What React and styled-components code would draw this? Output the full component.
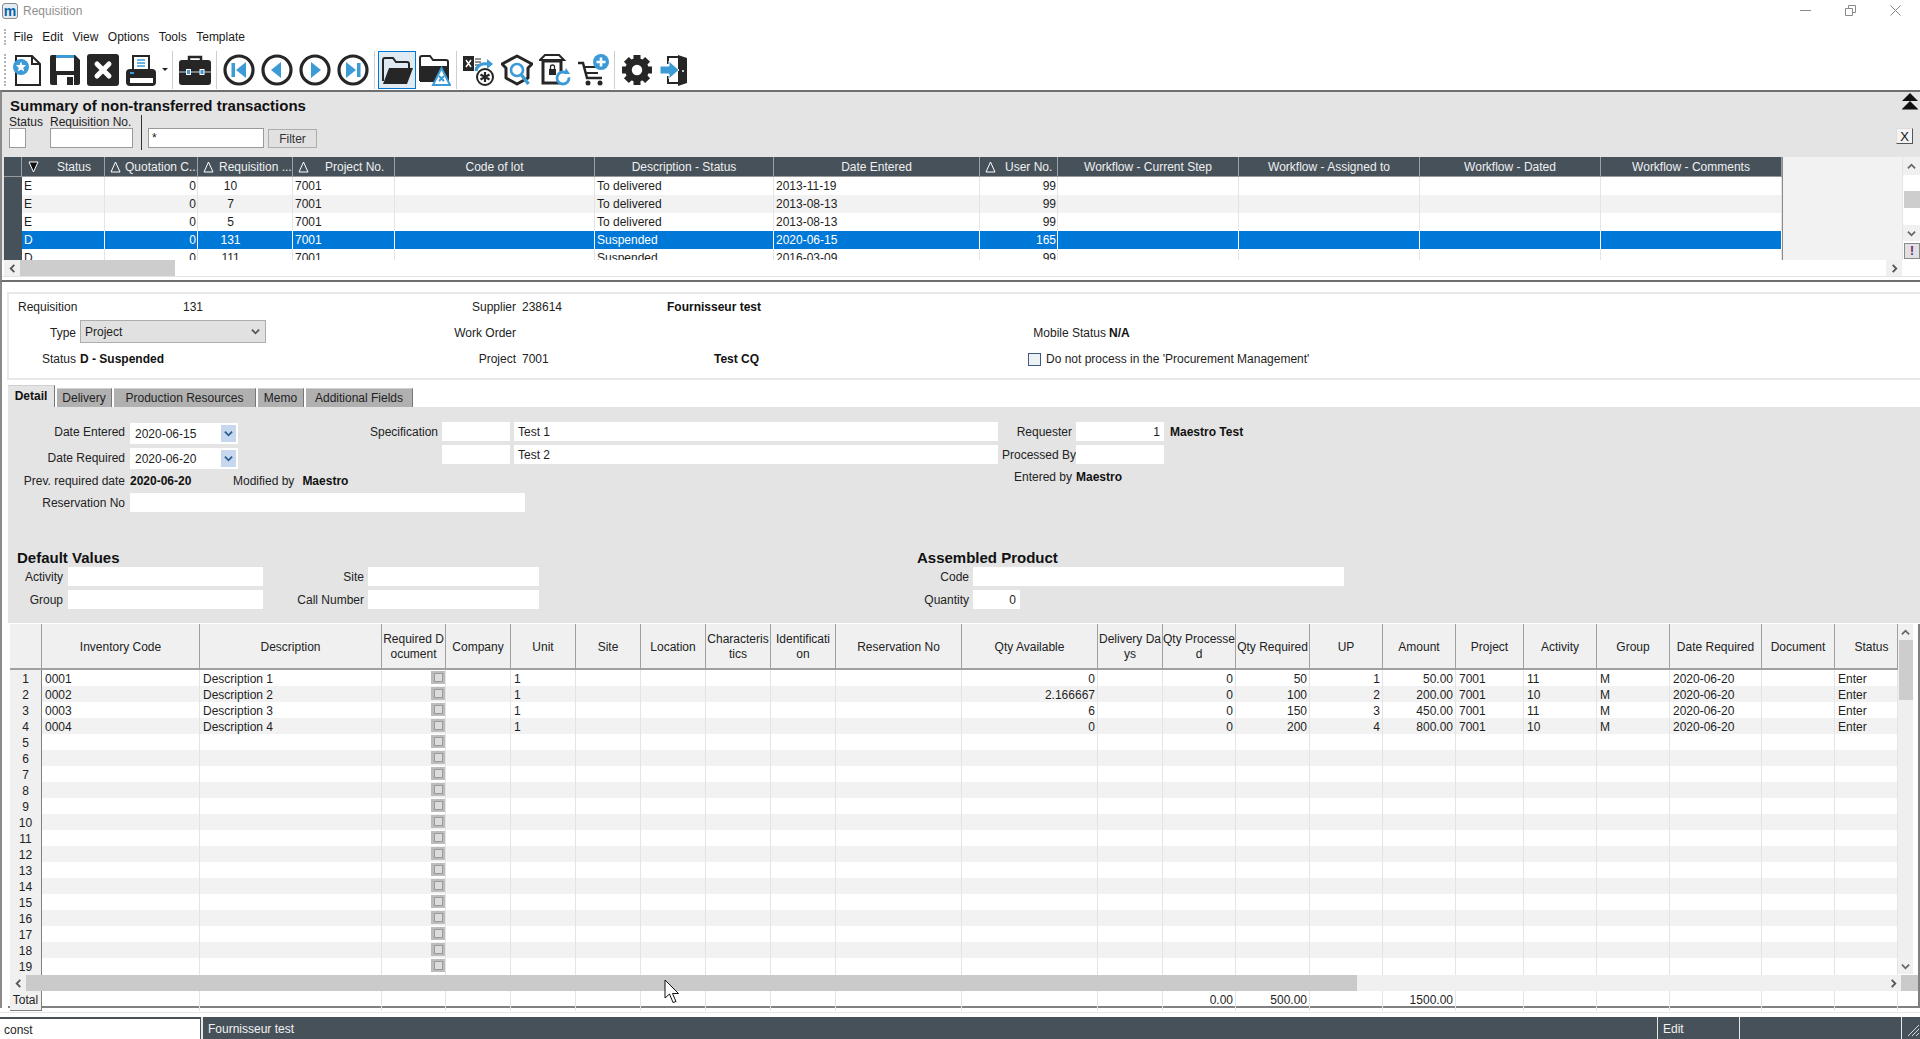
import React from 'react';
import styled, { createGlobalStyle } from 'styled-components';

const DARK = '#262626';
const BLUE = '#3c9ad6';
const SLATE = '#47515a';

const summaryCols = '18px 83px 93px 95px 102px 200px 179px 206px 78px 181px 181px 181px 181px';
const summaryHeads = [
  { text: '' },
  { text: 'Status', sort: 'down', pl: 35 },
  { text: 'Quotation C...', sort: 'up', pl: 20 },
  { text: 'Requisition ...', sort: 'up', pl: 21 },
  { text: 'Project No.', sort: 'up', pl: 32 },
  { text: 'Code of lot' },
  { text: 'Description - Status' },
  { text: 'Date Entered' },
  { text: 'User No.', sort: 'up', pl: 25 },
  { text: 'Workflow - Current Step' },
  { text: 'Workflow - Assigned to' },
  { text: 'Workflow - Dated' },
  { text: 'Workflow - Comments' },
];
const summaryRows = [
  ['E', '0', '10', '7001', 'To delivered', '2013-11-19', '99'],
  ['E', '0', '7', '7001', 'To delivered', '2013-08-13', '99'],
  ['E', '0', '5', '7001', 'To delivered', '2013-08-13', '99'],
  ['D', '0', '131', '7001', 'Suspended', '2020-06-15', '165'],
  ['D', '0', '111', '7001', 'Suspended', '2016-03-09', '99'],
];

const itemColumns = [
  { head: '', w: 32 },
  { head: 'Inventory Code', w: 158 },
  { head: 'Description', w: 182 },
  { head: 'Required D\nocument', w: 64 },
  { head: 'Company', w: 65 },
  { head: 'Unit', w: 65 },
  { head: 'Site', w: 65 },
  { head: 'Location', w: 65 },
  { head: 'Characteris\ntics', w: 65 },
  { head: 'Identificati\non', w: 65 },
  { head: 'Reservation No', w: 126 },
  { head: 'Qty Available', w: 136, right: true },
  { head: 'Delivery Da\nys', w: 65 },
  { head: 'Qty Processe\nd', w: 73, right: true },
  { head: 'Qty Required', w: 74, right: true },
  { head: 'UP', w: 73, right: true },
  { head: 'Amount', w: 73, right: true },
  { head: 'Project', w: 68 },
  { head: 'Activity', w: 73 },
  { head: 'Group', w: 73 },
  { head: 'Date Required', w: 92 },
  { head: 'Document', w: 73 },
  { head: 'Status', w: 63, headPl: 11 },
];
const itemCols = itemColumns.map((c) => `${c.w}px`).join(' ');
const itemRows = [
  { 1: '0001', 2: 'Description 1', 5: '1', 11: '0', 13: '0', 14: '50', 15: '1', 16: '50.00', 17: '7001', 18: '11', 19: 'M', 20: '2020-06-20', 22: 'Enter' },
  { 1: '0002', 2: 'Description 2', 5: '1', 11: '2.166667', 13: '0', 14: '100', 15: '2', 16: '200.00', 17: '7001', 18: '10', 19: 'M', 20: '2020-06-20', 22: 'Enter' },
  { 1: '0003', 2: 'Description 3', 5: '1', 11: '6', 13: '0', 14: '150', 15: '3', 16: '450.00', 17: '7001', 18: '11', 19: 'M', 20: '2020-06-20', 22: 'Enter' },
  { 1: '0004', 2: 'Description 4', 5: '1', 11: '0', 13: '0', 14: '200', 15: '4', 16: '800.00', 17: '7001', 18: '10', 19: 'M', 20: '2020-06-20', 22: 'Enter' },
];
const totals = { 13: '0.00', 14: '500.00', 16: '1500.00' };
const rowNumbers = Array.from({ length: 19 }, (_, i) => i + 1);

const Chevron = ({ dir = 'down', color = '#555', size = 9 }) => (
  <svg width={size} height={size} viewBox="0 0 10 10">
    <path
      d={{
        down: 'M1 3l4 4 4-4',
        up: 'M1 7l4-4 4 4',
        left: 'M7 1L3 5l4 4',
        right: 'M3 1l4 4-4 4',
      }[dir]}
      fill="none"
      stroke={color}
      strokeWidth="2"
    />
  </svg>
);

const Icon = ({ children }) => (
  <svg width="32" height="32" viewBox="0 0 32 32">{children}</svg>
);

const NewIcon = () => (
  <Icon>
    <path d="M5 2H21L29 10V31H5Z" fill="#fff" stroke={DARK} strokeWidth="2" />
    <path d="M21 2V10H29" fill="none" stroke={DARK} strokeWidth="2" />
    <circle cx="10" cy="13" r="8" fill={BLUE} />
    <polygon points="10,7.5 11.4,11 15.2,11.3 12.2,13.8 13.2,17.4 10,15.4 6.8,17.4 7.8,13.8 4.8,11.3 8.6,11" fill="#fff" />
  </Icon>
);
const SaveIcon = () => (
  <Icon>
    <path d="M1 3a2 2 0 0 1 2-2H26L31 6V29a2 2 0 0 1-2 2H3a2 2 0 0 1-2-2Z" fill={DARK} />
    <rect x="7" y="1" width="18" height="3" fill={BLUE} />
    <rect x="7" y="4" width="18" height="13" fill="#fff" />
    <rect x="8" y="21" width="17" height="10" fill="#fff" />
    <rect x="18" y="23" width="6" height="8" fill={DARK} />
  </Icon>
);
const CloseIcon = () => (
  <Icon>
    <rect x="0" y="0" width="32" height="32" rx="3" fill={DARK} />
    <path d="M10 10L22 22M22 10L10 22" stroke="#fff" strokeWidth="5" strokeLinecap="round" />
  </Icon>
);
const PrintIcon = () => (
  <Icon>
    <rect x="8" y="2" width="16" height="15" fill="#fff" stroke={DARK} strokeWidth="2" />
    <path d="M12 6h8M12 9h8M12 12h8" stroke={BLUE} strokeWidth="1.6" />
    <rect x="1" y="15" width="30" height="17" rx="4" fill={DARK} />
    <rect x="5" y="24" width="23" height="5" fill="#fff" />
    <rect x="5" y="18" width="4" height="2" fill={BLUE} />
  </Icon>
);
const CaseIcon = () => (
  <Icon>
    <path d="M10 8V3h12v5" fill="none" stroke={DARK} strokeWidth="2.5" />
    <rect x="0" y="6" width="32" height="25" rx="3" fill={DARK} />
    <path d="M0 18h32" stroke="#cfd6da" strokeWidth="1" />
    <rect x="7.5" y="15.5" width="4" height="5" fill={BLUE} stroke="#fff" />
    <rect x="21" y="15.5" width="4" height="5" fill={BLUE} stroke="#fff" />
  </Icon>
);
const NavIcon = ({ children }) => (
  <Icon>
    <circle cx="16" cy="16" r="14" fill="#fff" stroke={DARK} strokeWidth="3.2" />
    {children}
  </Icon>
);
const FolderIcon = () => (
  <Icon>
    <path d="M2 27V6a2 2 0 0 1 2-2h8l3 4h11a2 2 0 0 1 2 2v4" fill="none" stroke={DARK} strokeWidth="2" />
    <path d="M2 30L8 14H32L26 30Z" fill={DARK} />
  </Icon>
);
const FolderWarnIcon = () => (
  <Icon>
    <path d="M1 27V4a2 2 0 0 1 2-2h8l3 4h13a2 2 0 0 1 2 2v4" fill="none" stroke={DARK} strokeWidth="2" />
    <path d="M1 12H30V28H1Z" fill={DARK} />
    <polygon points="22.5,14 31,31 14,31" fill="#fff" stroke={BLUE} strokeWidth="2" />
    <path d="M20 22l5 5M25 22l-5 5" stroke={BLUE} strokeWidth="2" />
  </Icon>
);
const ExcelIcon = () => (
  <Icon>
    <rect x="0" y="2" width="11" height="15" fill={DARK} />
    <path d="M3 6l5 7M8 6l-5 7" stroke="#fff" strokeWidth="1.5" />
    <path d="M12 5h6M12 8h6M12 11h4M12 14h3" stroke={DARK} strokeWidth="1.2" />
    <path d="M13 17c1-6 6-8 12-7" fill="none" stroke={BLUE} strokeWidth="3" />
    <polygon points="24,5 30,10 24,15" fill={BLUE} />
    <circle cx="22" cy="23" r="8" fill="#fff" stroke={DARK} strokeWidth="2" />
    <path d="M22 18v10M17.5 20.5l9 5M26.5 20.5l-9 5" stroke={DARK} strokeWidth="2.2" />
  </Icon>
);
const BoxSearchIcon = () => (
  <Icon>
    <path d="M16 2L31 10L27 14V24L16 30L5 24V14L1 10Z" fill="#fff" stroke={DARK} strokeWidth="3" strokeLinejoin="round" />
    <circle cx="16" cy="16" r="6" fill="#fff" stroke={BLUE} strokeWidth="2.6" />
    <path d="M20.5 21l7 9" stroke={BLUE} strokeWidth="3.4" />
  </Icon>
);
const BoxRefreshIcon = () => (
  <Icon>
    <path d="M1 6L6 1H20L25 6Z" fill="#fff" stroke={DARK} strokeWidth="2" />
    <rect x="4" y="7" width="18" height="22" fill="#fff" stroke={DARK} strokeWidth="3" />
    <rect x="10" y="15" width="7" height="6" fill={DARK} />
    <path d="M11.5 15v-2a2 2 0 0 1 4 0v2" fill="none" stroke={DARK} strokeWidth="1.3" />
    <circle cx="24" cy="24" r="6" fill="#fff" stroke={BLUE} strokeWidth="2.8" strokeDasharray="30 6" />
    <polygon points="27,14 31,20 25,20" fill={BLUE} />
  </Icon>
);
const CartIcon = () => (
  <Icon>
    <path d="M1 9H6L10 24H25" fill="none" stroke={DARK} strokeWidth="2.5" />
    <path d="M7 13H20M9 19H21" stroke={DARK} strokeWidth="2" />
    <circle cx="11" cy="29" r="2.5" fill={DARK} />
    <circle cx="23" cy="29" r="2.5" fill={DARK} />
    <circle cx="24" cy="8" r="8" fill={BLUE} />
    <path d="M24 3.5v9M19.5 8h9" stroke="#fff" strokeWidth="2.6" />
  </Icon>
);
const GearIcon = () => (
  <Icon>
    {[0, 45, 90, 135, 180, 225, 270, 315].map((a) => (
      <rect key={a} x="12.5" y="1" width="7" height="7" fill={DARK} transform={`rotate(${a} 16 16)`} />
    ))}
    <circle cx="16" cy="16" r="8.5" fill="none" stroke={DARK} strokeWidth="6.5" />
  </Icon>
);
const DoorIcon = () => (
  <Icon>
    <path d="M19 1L28 4V29L19 32Z" fill={DARK} />
    <path d="M19 3H9V10M9 22V29H19" fill="none" stroke={DARK} strokeWidth="2" />
    <path d="M1 12H10V7L20 16L10 25V20H1Z" fill={BLUE} stroke="#fff" strokeWidth="1" />
    <circle cx="24" cy="17" r="1" fill="#fff" />
  </Icon>
);

const GlobalStyle = createGlobalStyle`
  html, body {
    margin: 0;
    background: #fff;
    font-family: "Liberation Sans", Arial, sans-serif;
    font-size: 12px;
    color: #1e1e1e;
  }
  * {
    box-sizing: border-box;
  }
`;

const Page = styled.div`
  position: relative;
  display: flex;
  flex-direction: column;
  width: 1920px;
  height: 1039px;
  overflow: hidden;
`;

const TitleBar = styled.div`
  display: flex;
  align-items: center;
  height: 24px;
  padding: 0 0 2px 2px;
`;
const Logo = styled.span`
  display: flex;
  align-items: center;
  justify-content: center;
  width: 16px;
  height: 16px;
  border: 1px solid #8a8a8a;
  border-radius: 3px;
  background: #e4edf4;
  color: #0c62a8;
  font-size: 14px;
  font-weight: bold;
  line-height: 1;
`;
const WindowName = styled.span`
  margin-left: 5px;
  color: #8f8f8f;
`;
const WindowButtons = styled.div`
  display: flex;
  align-items: center;
  gap: 34px;
  margin: 0 0 2px auto;
  padding-right: 19px;
`;

const MenuBar = styled.div`
  display: flex;
  align-items: center;
  gap: 9.5px;
  height: 25px;
  padding-left: 4px;
`;
const Grip = styled.span`
  width: 2px;
  height: ${(p) => p.$h}px;
  margin-right: ${(p) => p.$mr}px;
  border-left: 2px dotted #b5b5b5;
`;
const MenuItem = styled.span`
  color: #1a1a1a;
`;

const Toolbar = styled.div`
  display: flex;
  align-items: center;
  gap: 6px;
  height: 41px;
  padding-left: 4px;
`;
const ToolButton = styled.span`
  display: flex;
  width: 32px;
  height: 32px;
  background: ${(p) => (p.$active ? '#dfeaf3' : 'transparent')};
  box-shadow: ${(p) => (p.$active ? '0 0 0 2px #dfeaf3, 0 0 0 3px #0078d7' : 'none')};
`;
const ToolArrow = styled.span`
  width: 3px;
  border-top: 3px solid #222;
  border-left: 3px solid transparent;
  border-right: 3px solid transparent;
  margin-left: -2px;
  transform: translateX(1px);
`;
const ToolSep = styled.span`
  width: 1px;
  height: 38px;
  margin-left: -1px;
  background: #cfcfcf;
`;

const Pane = styled.section`
  display: flex;
  flex-direction: column;
  height: 192px;
  border-top: 2px solid #6f6f6f;
  border-left: 2px solid #8a8a8a;
  border-bottom: 2px solid #6f6f6f;
`;
const SummaryHead = styled.div`
  display: flex;
  height: 65px;
  background: #e4e4e4;
`;
const SummaryLeft = styled.div`
  flex: 1;
  padding: 6px 0 0 7px;
`;
const SummaryTitle = styled.div`
  height: 17px;
  padding-left: 1px;
  color: #111;
  font-size: 15px;
  font-weight: bold;
  line-height: 16px;
`;
const FilterRow = styled.div`
  display: flex;
  align-items: flex-end;
  height: 35px;
`;
const FilterField = styled.div`
  display: flex;
  flex-direction: column;
  width: ${(p) => p.$w}px;
`;
const FilterLabel = styled.span`
  line-height: 11px;
  white-space: nowrap;
`;
const FilterInput = styled.div`
  width: ${(p) => p.$w}px;
  height: 20px;
  margin-bottom: 2px;
  padding: 2px 3px;
  border: 1px solid #9a9a9a;
  background: #fff;
`;
const FilterDivider = styled.span`
  align-self: stretch;
  width: 1px;
  margin: 0 6px 0 8px;
  background: #333;
`;
const FilterButton = styled.span`
  display: flex;
  align-items: center;
  justify-content: center;
  width: 49px;
  height: 19px;
  margin: 0 0 2px 4px;
  border: 1px solid #adadad;
  background: #e1e1e1;
  color: #333;
`;
const SummaryRight = styled.div`
  display: flex;
  flex-direction: column;
  align-items: flex-end;
  padding: 1px 2px 0 0;
`;
const StackButton = styled.span`
  display: flex;
  width: 16px;
  height: 17px;
`;
const ClearButton = styled.span`
  display: flex;
  align-items: center;
  justify-content: center;
  width: 17px;
  height: 16px;
  margin: 18px 5px 0 0;
  border: 1px solid #555;
  border-top-color: #ddd;
  border-left-color: #ddd;
  background: #f3f3f3;
  color: #111;
  font-size: 13px;
`;

const SummaryBody = styled.div`
  display: flex;
  height: 103px;
  padding-left: 2px;
  background: #e4e4e4;
`;
const SummaryTable = styled.div`
  width: 1779px;
  overflow: hidden;
  border-right: 1px solid #8a8a8a;
  background: #fff;
`;
const SummaryHeader = styled.div`
  display: grid;
  grid-template-columns: ${summaryCols};
  height: 20px;
  background: ${SLATE};
  border-bottom: 1px solid #9a9a9a;
`;
const SummaryHeadCell = styled.div`
  position: relative;
  display: flex;
  align-items: center;
  justify-content: ${(p) => (p.$pl ? 'flex-start' : 'center')};
  padding-left: ${(p) => p.$pl || 0}px;
  border-right: 1px solid #9aa0a5;
  color: #eef0f1;
  white-space: nowrap;
  overflow: hidden;
`;
const SortMark = styled.span`
  position: absolute;
  left: ${(p) => p.$left}px;
  top: 4px;
  display: flex;
`;
const SummaryRow = styled.div`
  display: grid;
  grid-template-columns: ${summaryCols};
  height: 18px;
  background: ${(p) => (p.$selected ? '#0078d7' : p.$alt ? '#f2f2f2' : '#fff')};
  color: ${(p) => (p.$selected ? '#fff' : '#1e1e1e')};
`;
const RowMarker = styled.div`
  background: ${SLATE};
`;
const SummaryCell = styled.div`
  padding: 0 ${(p) => (p.$inset ? 29 : 1)}px 0 ${(p) => (p.$inset ? 0 : 2)}px;
  border-right: 1px solid ${(p) => (p.$selected ? '#fff' : '#e4e4e4')};
  line-height: 18px;
  text-align: ${(p) => p.$align || 'left'};
  white-space: nowrap;
`;
const SummaryGutter = styled.div`
  flex: 1;
  background: #f2f2f2;
`;

const VScroll = styled.div`
  display: flex;
  flex-direction: column;
  flex: none;
  width: ${(p) => p.$w}px;
  margin-left: ${(p) => p.$ml || 0}px;
  background: ${(p) => p.$track};
`;
const ScrollArrow = styled.span`
  display: flex;
  align-items: center;
  justify-content: center;
  flex: none;
  width: ${(p) => p.$w || 'auto'}${(p) => (p.$w ? 'px' : '')};
  height: ${(p) => p.$h}px;
  margin-top: ${(p) => (p.$end ? 'auto' : '0')};
  margin-left: ${(p) => (p.$push ? 'auto' : '0')};
  background: #f0f0f0;
`;
const VThumb = styled.span`
  flex: none;
  height: ${(p) => p.$h}px;
  margin-top: ${(p) => p.$top}px;
  margin-left: 1px;
  background: #cdcdcd;
`;
const NoticeButton = styled.span`
  display: flex;
  align-items: center;
  justify-content: center;
  height: 16px;
  margin: 2px 0 1px 1px;
  border: 1px solid #8a8a8a;
  background: #e1e1e1;
  color: #6a1b6a;
  font-weight: bold;
`;

const HScroll = styled.div`
  display: flex;
  flex: none;
  height: 16px;
  padding-left: ${(p) => p.$pl || 0}px;
  background: ${(p) => p.$track};
`;
const HThumb = styled.span`
  width: ${(p) => p.$w}px;
  background: ${(p) => p.$color};
`;
const HCorner = styled.span`
  width: ${(p) => p.$w}px;
  background: ${(p) => p.$color};
`;
const PaneFoot = styled.div`
  height: 4px;
  border-top: 1px solid #e4e4e4;
`;

const Body = styled.div`
  display: flex;
  flex-direction: column;
  height: 726px;
  padding: 10px 0 0 6px;
  border-left: 2px solid #8a8a8a;
`;
const HeadPanel = styled.div`
  display: grid;
  grid-template-columns: 71px 361px 81px 145px 361px 81px 1fr;
  grid-auto-rows: 26px;
  align-items: center;
  height: 88px;
  margin-left: -1px;
  border: solid #e8e8e8;
  border-width: 2px 0 2px 2px;
`;
const Label = styled.span`
  display: block;
  padding: ${(p) => (p.$left ? `0 0 0 ${p.$left}px` : `0 ${p.$gap ?? 4}px 0 0`)};
  text-align: ${(p) => (p.$left ? 'left' : 'right')};
  white-space: nowrap;
  color: #222;
`;
const Value = styled.span`
  display: block;
  padding-left: ${(p) => p.$pl || 0}px;
  font-weight: ${(p) => (p.$bold ? 'bold' : 'normal')};
  white-space: nowrap;
  color: ${(p) => (p.$bold ? '#111' : '#222')};
`;
const SelectBox = styled.div`
  display: flex;
  align-items: center;
  justify-content: space-between;
  width: 186px;
  height: 23px;
  margin-top: -3px;
  padding: 0 5px 0 4px;
  border: 1px solid #adadad;
  background: #e1e1e1;
`;
const CheckField = styled.div`
  grid-column: 6 / 8;
  display: flex;
  align-items: center;
  gap: 5px;
`;
const CheckBox = styled.span`
  width: 13px;
  height: 13px;
  border: 1px solid #3d5a80;
  background: #eef1f4;
`;

const Tabs = styled.div`
  display: flex;
  align-items: flex-end;
  gap: 2px;
  height: 22px;
  margin-top: 5px;
`;
const Tab = styled.span`
  display: flex;
  align-items: center;
  justify-content: center;
  width: ${(p) => p.$w}px;
  height: ${(p) => (p.$active ? 22 : 19)}px;
  padding-bottom: ${(p) => (p.$active ? 2 : 0)}px;
  border-top: 1px solid #d0d0d0;
  border-right: 1px solid #777;
  background: ${(p) => (p.$active ? '#e4e4e4' : '#b0b0b0')};
  font-weight: ${(p) => (p.$active ? 'bold' : 'normal')};
  color: ${(p) => (p.$active ? '#111' : '#222')};
`;

const DetailPanel = styled.div`
  height: 216px;
  padding-top: 15px;
  background: #e4e4e4;
`;
const DetailGrid = styled.div`
  display: grid;
  grid-template-columns: 122px 108px 204px 72px 488px 74px 94px 1fr;
  grid-template-rows: 23px 25px 22px 58px;
`;
const FieldLabel = styled(Label)`
  line-height: ${(p) => p.$lh || 21}px;
`;
const TextBox = styled.div`
  width: ${(p) => p.$w}px;
  height: 19px;
  margin-top: ${(p) => p.$mt || 0}px;
  padding: 0 4px;
  background: #fff;
  line-height: 21px;
  text-align: ${(p) => (p.$right ? 'right' : 'left')};
`;
const DateBox = styled.div`
  display: flex;
  align-items: center;
  justify-content: space-between;
  width: 108px;
  height: 21px;
  margin-top: ${(p) => p.$mt}px;
  padding: 0 2px 0 5px;
  background: #fff;
`;
const DateButton = styled.span`
  display: flex;
  align-items: center;
  justify-content: center;
  width: 15px;
  height: 17px;
  background: #c7d7ee;
`;
const InfoRow = styled.div`
  grid-column: 2 / 6;
  display: flex;
  gap: 8px;
  line-height: 22px;
`;
const InfoValue = styled.span`
  width: ${(p) => p.$w || 'auto'}${(p) => (p.$w ? 'px' : '')};
  font-weight: bold;
  line-height: ${(p) => p.$lh ? `${p.$lh}px` : 'inherit'};
  white-space: nowrap;
  color: #111;
`;
const WideCell = styled.div`
  grid-column: 2 / 6;
`;
const LowerGrid = styled.div`
  display: grid;
  grid-template-columns: 60px 195px 105px 171px 434px 1fr;
  grid-template-rows: 17px 23px 23px;
`;
const SectionTitle = styled.div`
  grid-column: ${(p) => p.$col};
  padding-left: ${(p) => p.$pl}px;
  font-size: 15px;
  font-weight: bold;
  line-height: 16px;
  color: #111;
`;

const Items = styled.div`
  display: flex;
  flex-direction: column;
  height: 384px;
  margin-top: 1px;
  padding-left: 2px;
  border-bottom: 2px solid #808080;
  border-right: 2px solid #808080;
`;
const ItemsMain = styled.div`
  display: flex;
  height: 350px;
`;
const ItemsTable = styled.div`
  width: 1888px;
`;
const ItemsHeader = styled.div`
  display: grid;
  grid-template-columns: ${itemCols};
  height: 46px;
  border-bottom: 2px solid #a0a0a0;
  background: #f0f0f0;
`;
const ItemsHeadCell = styled.div`
  display: flex;
  align-items: center;
  justify-content: center;
  padding: 2px 0 0 ${(p) => p.$pl || 0}px;
  border-right: 1px solid #a0a0a0;
  line-height: 15px;
  text-align: center;
  white-space: pre;
  color: #222;
  overflow: hidden;
`;
const ItemsRow = styled.div`
  display: grid;
  grid-template-columns: ${itemCols};
  height: ${(p) => p.$h || 16}px;
  background: ${(p) => (p.$alt ? '#f2f2f2' : '#fff')};
`;
const RowNumber = styled.div`
  border-right: 1px solid #808080;
  border-bottom: 1px solid #808080;
  background: #f0f0f0;
  line-height: 19px;
  text-align: center;
  color: #222;
`;
const ItemCell = styled.div`
  display: flex;
  justify-content: ${(p) => (p.$right ? 'flex-end' : 'flex-start')};
  padding: 0 ${(p) => (p.$flush ? 0 : 2)}px 0 ${(p) => (p.$flush ? 0 : 3)}px;
  border-right: 1px solid #e4e4e4;
  line-height: 18px;
  white-space: nowrap;
  color: #1e1e1e;
`;
const DocCheck = styled.span`
  display: flex;
  align-items: center;
  justify-content: center;
  width: 14px;
  height: 13px;
  margin: 1px 0 0 auto;
  background: #bcbcbc;
`;
const DocCheckInner = styled.span`
  width: 9px;
  height: 9px;
  border: 1px solid #9a9a9a;
  background: #dcdcdc;
`;
const ItemsTotalGap = styled.div`
  height: 1px;
`;

const FootGap = styled.div`
  height: 9px;
  padding-top: 4px;
`;
const FootLine = styled.div`
  height: 1px;
  background: #e6e6e6;
`;
const StatusBar = styled.footer`
  display: flex;
  height: 22px;
  background: ${SLATE};
  color: #f2f2f2;
`;
const ConstField = styled.div`
  width: 200px;
  margin-top: 2px;
  padding-left: 4px;
  background: #fff;
  color: #1e1e1e;
  line-height: 23px;
`;
const StatusSegment = styled.div`
  display: flex;
  align-items: flex-end;
  flex: ${(p) => (p.$w ? 'none' : 1)};
  width: ${(p) => p.$w || 0}px;
  margin-left: ${(p) => p.$ml || 0}px;
  padding: 0 0 3px 5px;
  border-left: ${(p) => p.$edge || 1}px solid #e8e8e8;
  white-space: nowrap;
`;
const Pointer = styled.svg`
  position: absolute;
  left: 664px;
  top: 979px;
`;

const SortGlyph = ({ dir }) => (
  <svg width="11" height="12" viewBox="0 0 11 12">
    {dir === 'down' ? (
      <polygon points="1,1 10,1 5.5,11" fill="#111" stroke="#fff" strokeWidth="1" />
    ) : (
      <polygon points="5.5,1 10,11 1,11" fill="none" stroke="#fff" strokeWidth="1" />
    )}
  </svg>
);

const SummaryGrid = () => (
  <SummaryTable>
    <SummaryHeader>
      {summaryHeads.map((h, i) => (
        <SummaryHeadCell key={i} $pl={h.pl}>
          {h.sort && (
            <SortMark $left={h.sort === 'down' ? 6 : 5}>
              <SortGlyph dir={h.sort} />
            </SortMark>
          )}
          {h.text}
        </SummaryHeadCell>
      ))}
    </SummaryHeader>
    {summaryRows.map((r, i) => {
      const selected = i === 3;
      const cell = { $selected: selected };
      return (
        <SummaryRow key={i} $selected={selected} $alt={i === 1}>
          <RowMarker />
          <SummaryCell {...cell}>{r[0]}</SummaryCell>
          <SummaryCell {...cell} $align="right">{r[1]}</SummaryCell>
          <SummaryCell {...cell} $align="center" $inset>{r[2]}</SummaryCell>
          <SummaryCell {...cell}>{r[3]}</SummaryCell>
          <SummaryCell {...cell} />
          <SummaryCell {...cell}>{r[4]}</SummaryCell>
          <SummaryCell {...cell}>{r[5]}</SummaryCell>
          <SummaryCell {...cell} $align="right">{r[6]}</SummaryCell>
          <SummaryCell {...cell} />
          <SummaryCell {...cell} />
          <SummaryCell {...cell} />
          <SummaryCell {...cell} />
        </SummaryRow>
      );
    })}
  </SummaryTable>
);

const ItemsGrid = () => (
  <Items>
    <ItemsMain>
      <ItemsTable>
        <ItemsHeader>
          {itemColumns.map((c, i) => (
            <ItemsHeadCell key={i} $pl={c.headPl}>{c.head}</ItemsHeadCell>
          ))}
        </ItemsHeader>
        {rowNumbers.map((n, r) => (
          <ItemsRow key={n} $alt={r % 2 === 1}>
            <RowNumber>{n}</RowNumber>
            {itemColumns.slice(1).map((c, i) => (
              <ItemCell key={i} $right={c.right} $flush={i === 2}>
                {i === 2 ? (
                  <DocCheck>
                    <DocCheckInner />
                  </DocCheck>
                ) : (
                  itemRows[r]?.[i + 1]
                )}
              </ItemCell>
            ))}
          </ItemsRow>
        ))}
      </ItemsTable>
      <VScroll $w={15} $track="#efefef">
        <ScrollArrow $h={16}>
          <Chevron dir="up" color="#666" />
        </ScrollArrow>
        <VThumb $h={60} $top={0} />
        <ScrollArrow $h={16} $end>
          <Chevron color="#666" />
        </ScrollArrow>
      </VScroll>
    </ItemsMain>
    <ItemsTotalGap />
    <HScroll $track="#f0f0f0">
      <ScrollArrow $w={16} $h={16}>
        <Chevron dir="left" color="#555" />
      </ScrollArrow>
      <HThumb $w={1331} $color="#cacaca" />
      <ScrollArrow $w={16} $h={16} $push>
        <Chevron dir="right" color="#555" />
      </ScrollArrow>
      <HCorner $w={17} $color="#cacaca" />
    </HScroll>
    <ItemsRow $h={15}>
      <RowNumber>Total</RowNumber>
      {itemColumns.slice(1).map((c, i) => (
        <ItemCell key={i} $right={c.right}>{totals[i + 1]}</ItemCell>
      ))}
    </ItemsRow>
  </Items>
);

export default function App() {
  return (
    <Page>
      <GlobalStyle />
      <TitleBar>
        <Logo>m</Logo>
        <WindowName>Requisition</WindowName>
        <WindowButtons>
          <svg width="11" height="11" viewBox="0 0 11 11"><path d="M0 5.5h11" stroke="#8a8a8a" /></svg>
          <svg width="11" height="11" viewBox="0 0 11 11"><path d="M.5 3.5h7v7h-7zM3.5 3V.5h7v7H8" fill="none" stroke="#8a8a8a" /></svg>
          <svg width="11" height="11" viewBox="0 0 11 11"><path d="M.5.5l10 10M10.5.5l-10 10" stroke="#8a8a8a" /></svg>
        </WindowButtons>
      </TitleBar>

      <MenuBar>
        <Grip $h={16} $mr={-2} />
        {['File', 'Edit', 'View', 'Options', 'Tools', 'Template'].map((m) => (
          <MenuItem key={m}>{m}</MenuItem>
        ))}
      </MenuBar>

      <Toolbar>
        <Grip $h={32} $mr={-1} />
        <ToolButton><NewIcon /></ToolButton>
        <ToolButton><SaveIcon /></ToolButton>
        <ToolButton><CloseIcon /></ToolButton>
        <ToolButton><PrintIcon /></ToolButton>
        <ToolArrow />
        <ToolSep />
        <ToolButton><CaseIcon /></ToolButton>
        <ToolSep />
        <ToolButton>
          <NavIcon>
            <rect x="8.5" y="9" width="3.5" height="14" fill={BLUE} />
            <polygon points="23,8 23,24 13,16" fill={BLUE} />
          </NavIcon>
        </ToolButton>
        <ToolButton>
          <NavIcon><polygon points="20,8 20,24 10,16" fill={BLUE} /></NavIcon>
        </ToolButton>
        <ToolButton>
          <NavIcon><polygon points="12,8 12,24 22,16" fill={BLUE} /></NavIcon>
        </ToolButton>
        <ToolButton>
          <NavIcon>
            <polygon points="9,8 9,24 19,16" fill={BLUE} />
            <rect x="20" y="9" width="3.5" height="14" fill={BLUE} />
          </NavIcon>
        </ToolButton>
        <ToolSep />
        <ToolButton $active><FolderIcon /></ToolButton>
        <ToolButton><FolderWarnIcon /></ToolButton>
        <ToolSep />
        <ToolButton><ExcelIcon /></ToolButton>
        <ToolButton><BoxSearchIcon /></ToolButton>
        <ToolButton><BoxRefreshIcon /></ToolButton>
        <ToolButton><CartIcon /></ToolButton>
        <ToolSep />
        <ToolButton><GearIcon /></ToolButton>
        <ToolButton><DoorIcon /></ToolButton>
      </Toolbar>

      <Pane>
        <SummaryHead>
          <SummaryLeft>
            <SummaryTitle>Summary of non-transferred transactions</SummaryTitle>
            <FilterRow>
              <FilterField $w={41}>
                <FilterLabel>Status</FilterLabel>
                <FilterInput $w={17} />
              </FilterField>
              <FilterField $w={83}>
                <FilterLabel>Requisition No.</FilterLabel>
                <FilterInput $w={83} />
              </FilterField>
              <FilterDivider />
              <FilterInput $w={116}>*</FilterInput>
              <FilterButton>Filter</FilterButton>
            </FilterRow>
          </SummaryLeft>
          <SummaryRight>
            <StackButton>
              <svg width="16" height="17" viewBox="0 0 16 17">
                <polygon points="8,0 16,8 0,8" fill="#111" />
                <polygon points="8,8 16,16 0,16" fill="#111" />
                <path d="M0 16.5h16" stroke="#777" />
              </svg>
            </StackButton>
            <ClearButton>X</ClearButton>
          </SummaryRight>
        </SummaryHead>
        <SummaryBody>
          <SummaryGrid />
          <SummaryGutter />
          <VScroll $w={17} $ml={1} $track="#fff">
            <ScrollArrow $h={18}>
              <Chevron dir="up" color="#666" />
            </ScrollArrow>
            <VThumb $h={17} $top={16} />
            <ScrollArrow $h={16} $end>
              <Chevron color="#666" />
            </ScrollArrow>
            <NoticeButton>!</NoticeButton>
          </VScroll>
        </SummaryBody>
        <HScroll $pl={2} $track="#fff">
          <ScrollArrow $w={16} $h={16}>
            <Chevron dir="left" color="#555" />
          </ScrollArrow>
          <HThumb $w={155} $color="#cdcdcd" />
          <ScrollArrow $w={16} $h={16} $push>
            <Chevron dir="right" color="#555" />
          </ScrollArrow>
          <HCorner $w={18} $color="#fff" />
        </HScroll>
        <PaneFoot />
      </Pane>

      <Body>
        <HeadPanel>
          <Label $left={9}>Requisition</Label>
          <Value $pl={103}>131</Value>
          <Label $gap={6}>Supplier</Label>
          <Value>238614</Value>
          <Value $bold>Fournisseur test</Value>
          <span />
          <span />

          <Label>Type</Label>
          <SelectBox>
            Project
            <Chevron color="#555" />
          </SelectBox>
          <Label $gap={6}>Work Order</Label>
          <span />
          <span />
          <Label $gap={3}>Mobile Status</Label>
          <Value $bold>N/A</Value>

          <Label>Status</Label>
          <Value $bold>D - Suspended</Value>
          <Label $gap={6}>Project</Label>
          <Value>7001</Value>
          <Value $bold $pl={47}>Test CQ</Value>
          <CheckField>
            <CheckBox />
            Do not process in the 'Procurement Management'
          </CheckField>
        </HeadPanel>

        <Tabs>
          <Tab $active $w={47}>Detail</Tab>
          <Tab $w={55}>Delivery</Tab>
          <Tab $w={142}>Production Resources</Tab>
          <Tab $w={46}>Memo</Tab>
          <Tab $w={107}>Additional Fields</Tab>
        </Tabs>

        <DetailPanel>
          <DetailGrid>
            <FieldLabel $gap={5} $lh={21}>Date Entered</FieldLabel>
            <DateBox $mt={1}>
              2020-06-15
              <DateButton><Chevron color="#2b5c8f" /></DateButton>
            </DateBox>
            <FieldLabel>Specification</FieldLabel>
            <TextBox $w={68} />
            <TextBox $w={484}>Test 1</TextBox>
            <FieldLabel>Requester</FieldLabel>
            <TextBox $w={88} $right>1</TextBox>
            <InfoValue $lh={21}>Maestro Test</InfoValue>

            <FieldLabel $gap={5} $lh={27}>Date Required</FieldLabel>
            <DateBox $mt={3}>
              2020-06-20
              <DateButton><Chevron color="#2b5c8f" /></DateButton>
            </DateBox>
            <span />
            <TextBox $w={68} />
            <TextBox $w={484}>Test 2</TextBox>
            <FieldLabel>Processed By</FieldLabel>
            <TextBox $w={88} />
            <span />

            <FieldLabel $gap={5} $lh={22}>Prev. required date</FieldLabel>
            <InfoRow>
              <InfoValue $w={95}>2020-06-20</InfoValue>
              <span>Modified by</span>
              <InfoValue>Maestro</InfoValue>
            </InfoRow>
            <FieldLabel $lh={14}>Entered by</FieldLabel>
            <InfoValue $lh={14}>Maestro</InfoValue>
            <span />

            <FieldLabel $gap={5} $lh={23}>Reservation No</FieldLabel>
            <WideCell>
              <TextBox $w={395} $mt={1} />
            </WideCell>
          </DetailGrid>

          <LowerGrid>
            <SectionTitle $col="1 / 5" $pl={9}>Default Values</SectionTitle>
            <SectionTitle $col="5 / 7" $pl={378}>Assembled Product</SectionTitle>

            <FieldLabel $gap={5}>Activity</FieldLabel>
            <TextBox $w={195} />
            <FieldLabel>Site</FieldLabel>
            <TextBox $w={171} />
            <FieldLabel>Code</FieldLabel>
            <TextBox $w={371} />

            <FieldLabel $gap={5}>Group</FieldLabel>
            <TextBox $w={195} />
            <FieldLabel>Call Number</FieldLabel>
            <TextBox $w={171} />
            <FieldLabel>Quantity</FieldLabel>
            <TextBox $w={47} $right>0</TextBox>
          </LowerGrid>
        </DetailPanel>

        <ItemsGrid />
      </Body>

      <FootGap>
        <FootLine />
      </FootGap>
      <StatusBar>
        <ConstField>const</ConstField>
        <StatusSegment $ml={1} $edge={2}>Fournisseur test</StatusSegment>
        <StatusSegment $w={82}>Edit</StatusSegment>
        <StatusSegment $w={162} />
        <StatusSegment $w={19}>
          <svg width="12" height="12" viewBox="0 0 12 12">
            <path d="M12 1L1 12M12 5L5 12M12 9L9 12" stroke="#d8d8d8" />
          </svg>
        </StatusSegment>
      </StatusBar>

      <Pointer width="17" height="25" viewBox="0 0 17 25">
        <path d="M1 1V19L5.5 15L9 23.5L12 22.5L8.5 14.5H14.5Z" fill="#fff" stroke="#111" />
      </Pointer>
    </Page>
  );
}
